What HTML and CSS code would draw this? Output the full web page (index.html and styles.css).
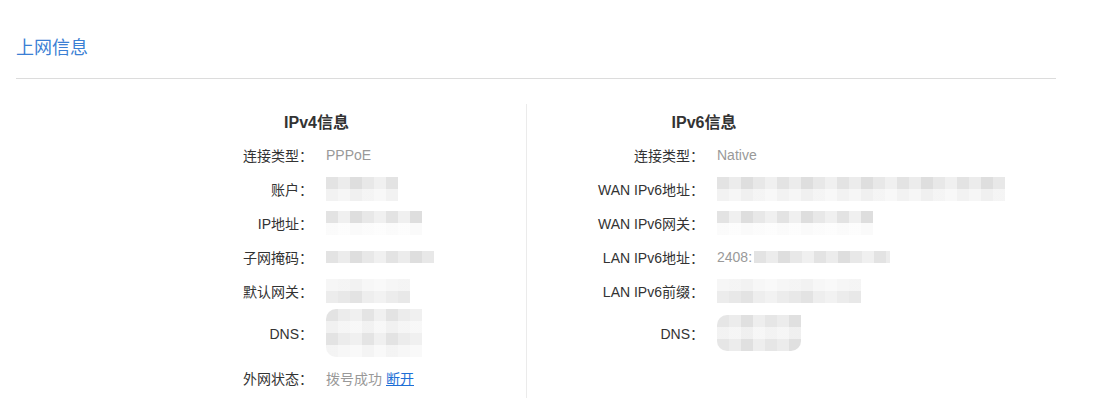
FILE: index.html
```html
<!DOCTYPE html>
<html>
<head>
<meta charset="utf-8">
<link rel="stylesheet" href="styles.css">
</head>
<body>
<div class="page">
	<h1 class="page-title">上网信息</h1>
	<div class="info">
		<div class="col col-v4">
			<h2 class="col-title">IPv4信息</h2>
			<div class="rows">
				<div class="row"><span class="label">连接类型：</span><span class="value">PPPoE</span></div>
				<div class="row"><span class="label">账户：</span><span class="mask w72 two"></span></div>
				<div class="row"><span class="label">IP地址：</span><span class="mask w96 two fade"></span></div>
				<div class="row"><span class="label">子网掩码：</span><span class="mask w108"></span></div>
				<div class="row"><span class="label">默认网关：</span><span class="mask w84 two soft"></span></div>
				<div class="row row-dns"><span class="label">DNS：</span><span class="mask w96 four"></span></div>
				<div class="row row-last"><span class="label">外网状态：</span><span class="value">拨号成功 <a href="#" class="link">断开</a></span></div>
			</div>
		</div>
		<div class="col col-v6">
			<h2 class="col-title">IPv6信息</h2>
			<div class="rows">
				<div class="row"><span class="label">连接类型：</span><span class="value">Native</span></div>
				<div class="row"><span class="label">WAN IPv6地址：</span><span class="mask w288 two"></span></div>
				<div class="row"><span class="label">WAN IPv6网关：</span><span class="mask w156 two fade"></span></div>
				<div class="row"><span class="label">LAN IPv6地址：</span><span class="value">2408:<span class="mask w136 inl"></span></span></div>
				<div class="row"><span class="label">LAN IPv6前缀：</span><span class="mask w144 two soft"></span></div>
				<div class="row row-dns"><span class="label">DNS：</span><span class="mask w84 three"></span></div>
			</div>
		</div>
	</div>
</div>
</body>
</html>
```

FILE: styles.css
```css
body{
	margin: 0;
	font-family: "Liberation Sans", "Noto Sans CJK SC", sans-serif;
	color: #333;
	background: #fff;
}
.page{
	padding: 0 54px 0 16px;
}
.page-title{
	margin: 0;
	padding-top: 36px;
	height: 42px;
	font-size: 18px;
	font-weight: normal;
	line-height: 24px;
	color: #3b7fd4;
	border-bottom: 1px solid #dcdcdc;
}
.info{
	display: grid;
	grid-template-columns: 511px 1fr;
	padding-top: 25px;
}
.col-v4{
	border-right: 1px solid #ebebeb;
	padding-left: 197px;
}
.col-v6{
	padding-left: 58px;
}
.col-title{
	margin: 0;
	padding-top: 2px;
	height: 32px;
	line-height: 34px;
	font-size: 16px;
	font-weight: bold;
	color: #333;
	text-align: center;
}
.col-v4 .col-title{
	width: 207px;
}
.col-v6 .col-title{
	width: 238px;
}
.row{
	display: flex;
	align-items: center;
	height: 34px;
	font-size: 14px;
}
.row-dns{
	height: 50px;
}
.row-last{
	height: 40px;
}
.label{
	flex: none;
	box-sizing: border-box;
	text-align: right;
	padding-right: 13px;
}
.col-v4 .label{
	width: 113px;
}
.col-v6 .label{
	width: 132px;
}
.value{
	color: #999;
	display: flex;
	align-items: center;
}
.link{
	color: #1f6fd6;
	margin-left: 4px;
}
.mask{
	display: inline-block;
	height: 12px;
	background: repeating-linear-gradient(90deg, #e3e3e3 0 12px, #ececec 12px 24px, #dedede 24px 36px, #e8e8e8 36px 48px, #f0f0f0 48px 60px);
}
.mask.two{
	height: 24px;
	background:
		linear-gradient(to bottom, rgba(255,255,255,0) 50%, rgba(255,255,255,.55) 50%),
		repeating-linear-gradient(90deg, #e3e3e3 0 12px, #ececec 12px 24px, #dedede 24px 36px, #e8e8e8 36px 48px, #f0f0f0 48px 60px);
}
.mask.fade{
	background:
		linear-gradient(to bottom, rgba(255,255,255,0) 50%, rgba(255,255,255,.85) 50%),
		repeating-linear-gradient(90deg, #e3e3e3 0 12px, #f0f0f0 12px 24px, #dedede 24px 36px, #e8e8e8 36px 48px, #f0f0f0 48px 60px);
}
.mask.soft{
	background:
		linear-gradient(to bottom, rgba(255,255,255,.55) 50%, rgba(255,255,255,0) 50%),
		repeating-linear-gradient(90deg, #ececec 0 12px, #e8e8e8 12px 24px, #e3e3e3 24px 36px, #eeeeee 36px 48px, #f2f2f2 48px 60px);
}
.mask.four{
	height: 48px;
	border-radius: 10px 0 0 10px;
	background:
		linear-gradient(to bottom, rgba(255,255,255,0) 25%, rgba(255,255,255,.5) 25% 50%, rgba(255,255,255,0) 50% 75%, rgba(255,255,255,.6) 75%),
		repeating-linear-gradient(90deg, #e3e3e3 0 12px, #ececec 12px 24px, #f0f0f0 24px 36px, #e4e4e4 36px 48px, #f0f0f0 48px 60px);
}
.mask.three{
	height: 36px;
	border-radius: 10px 0 10px 10px;
	background:
		linear-gradient(to bottom, rgba(255,255,255,0) 33%, rgba(255,255,255,.5) 33% 66%, rgba(255,255,255,0) 66%),
		repeating-linear-gradient(90deg, #e6e6e6 0 12px, #ececec 12px 24px, #e0e0e0 24px 36px, #eeeeee 36px 48px);
}
.mask.inl{
	margin-left: 2px;
}
.w72{ width: 72px; }
.w84{ width: 84px; }
.w96{ width: 96px; }
.w108{ width: 108px; }
.w136{ width: 136px; }
.w144{ width: 144px; }
.w156{ width: 156px; }
.w288{ width: 288px; }
```
